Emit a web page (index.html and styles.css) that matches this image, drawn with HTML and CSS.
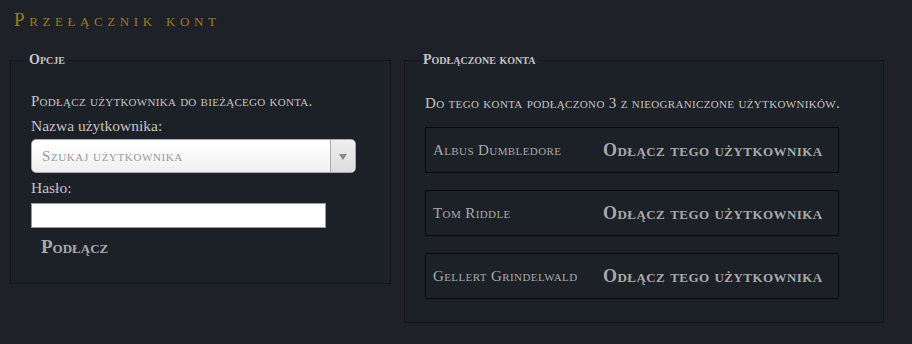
FILE: index.html
```html
<!DOCTYPE html>
<html lang="pl">
<head>
  <meta charset="UTF-8">
  <title>Przełącznik kont</title>
  <link rel="stylesheet" href="styles.css">
</head>
<body>

<h2 class="page-title">Przełącznik kont</h2>

<div class="switcher">
  <fieldset class="panel panel-options">
    <legend>Opcje</legend>
    <p class="panel-note">Podłącz użytkownika do bieżącego konta.</p>

    <label class="field-label" for="user">Nazwa użytkownika:</label>
    <div class="user-select" id="user">
      <span class="user-select-text">Szukaj użytkownika</span>
      <span class="user-select-arrow"></span>
    </div>

    <label class="field-label" for="pass">Hasło:</label>
    <input class="pass-input" id="pass" type="password">

    <button class="link-button" type="button">Podłącz</button>
  </fieldset>

  <fieldset class="panel panel-linked">
    <legend>Podłączone konta</legend>
    <p class="panel-note">Do tego konta podłączono 3 z nieograniczone użytkowników.</p>

    <div class="linked-row">
      <span class="linked-name">Albus Dumbledore</span>
      <button class="unlink-button" type="button">Odłącz tego użytkownika</button>
    </div>
    <div class="linked-row">
      <span class="linked-name">Tom Riddle</span>
      <button class="unlink-button" type="button">Odłącz tego użytkownika</button>
    </div>
    <div class="linked-row">
      <span class="linked-name">Gellert Grindelwald</span>
      <button class="unlink-button" type="button">Odłącz tego użytkownika</button>
    </div>
  </fieldset>
</div>

</body>
</html>
```

FILE: styles.css
```css
* {
  margin: 0;
  padding: 0;
  box-sizing: border-box;
}

:root {
  --page-bg: #1e2128;
  --panel-bg: #1c2027;
  --panel-border: #13161b;
  --gold: #9a7b25;
  --text: #c4c4c4;
  --text-dim: #a9a9a9;
}

body {
  background-color: var(--page-bg);
  color: var(--text);
  font-family: 'Liberation Serif', serif;
  padding: 10px 28px 0 10px;
}

.page-title {
  font-size: 19px;
  font-weight: normal;
  font-variant: small-caps;
  letter-spacing: 4.6px;
  color: var(--gold);
  margin-left: 4px;
  line-height: 20px;
}

.switcher {
  display: flex;
  align-items: flex-start;
  gap: 13px;
  margin-top: 22px;
}

.panel {
  border: 1px solid var(--panel-border);
  background-color: var(--panel-bg);
  padding: 0 20px;
}

.panel legend {
  font-variant: small-caps;
  font-weight: bold;
  font-size: 14px;
  padding: 0 3px;
  margin-left: -5px;
  color: var(--text);
}

.panel-options {
  width: 381px;
  height: 232px;
}

.panel-linked {
  width: 480px;
  height: 271px;
}

.panel-note {
  font-variant: small-caps;
  font-size: 15px;
  letter-spacing: 0.28px;
  margin-top: 23px;
  line-height: 20px;
}

.panel-linked .panel-note {
  letter-spacing: 0.34px;
  margin-top: 25px;
  margin-bottom: 14px;
}

.field-label {
  display: block;
  font-size: 15.5px;
  line-height: 20px;
  margin-top: 5px;
  color: var(--text);
}

.user-select {
  display: flex;
  width: 325px;
  height: 34px;
  margin: 3px 0 1px;
  border: 1px solid #aaa;
  border-radius: 5px;
  background: linear-gradient(#ffffff 20%, #eeeeee 100%);
  overflow: hidden;
}

.user-select-text {
  flex: 1;
  display: flex;
  align-items: center;
  padding-left: 10px;
  font-variant: small-caps;
  font-size: 15px;
  letter-spacing: 0.6px;
  color: #999;
}

.user-select-arrow {
  width: 25px;
  border-left: 1px solid #aaa;
  background: linear-gradient(#eeeeee, #dddddd);
  position: relative;
}

.user-select-arrow::after {
  content: '';
  position: absolute;
  left: 8px;
  top: 14px;
  border-left: 4px solid transparent;
  border-right: 4px solid transparent;
  border-top: 6px solid #888;
}

.pass-input {
  display: block;
  width: 295px;
  height: 25px;
  margin-top: 5px;
  border: 1px solid #999;
  background: #fff;
}

.link-button {
  display: block;
  background: none;
  border: none;
  font-family: 'Liberation Serif', serif;
  font-variant: small-caps;
  font-weight: bold;
  font-size: 19px;
  color: var(--text-dim);
  margin: 8px 0 0 10px;
}

.linked-row {
  display: grid;
  grid-template-columns: 170px auto;
  align-items: center;
  width: 414px;
  height: 46px;
  margin-bottom: 17px;
  border: 1px solid #08090b;
  padding-left: 7px;
}

.linked-name {
  font-variant: small-caps;
  font-size: 15px;
  letter-spacing: 0.4px;
  color: var(--text-dim);
}

.unlink-button {
  background: none;
  border: none;
  text-align: left;
  font-family: 'Liberation Serif', serif;
  font-variant: small-caps;
  font-weight: bold;
  font-size: 18px;
  letter-spacing: 0.45px;
  color: var(--text-dim);
}
```
